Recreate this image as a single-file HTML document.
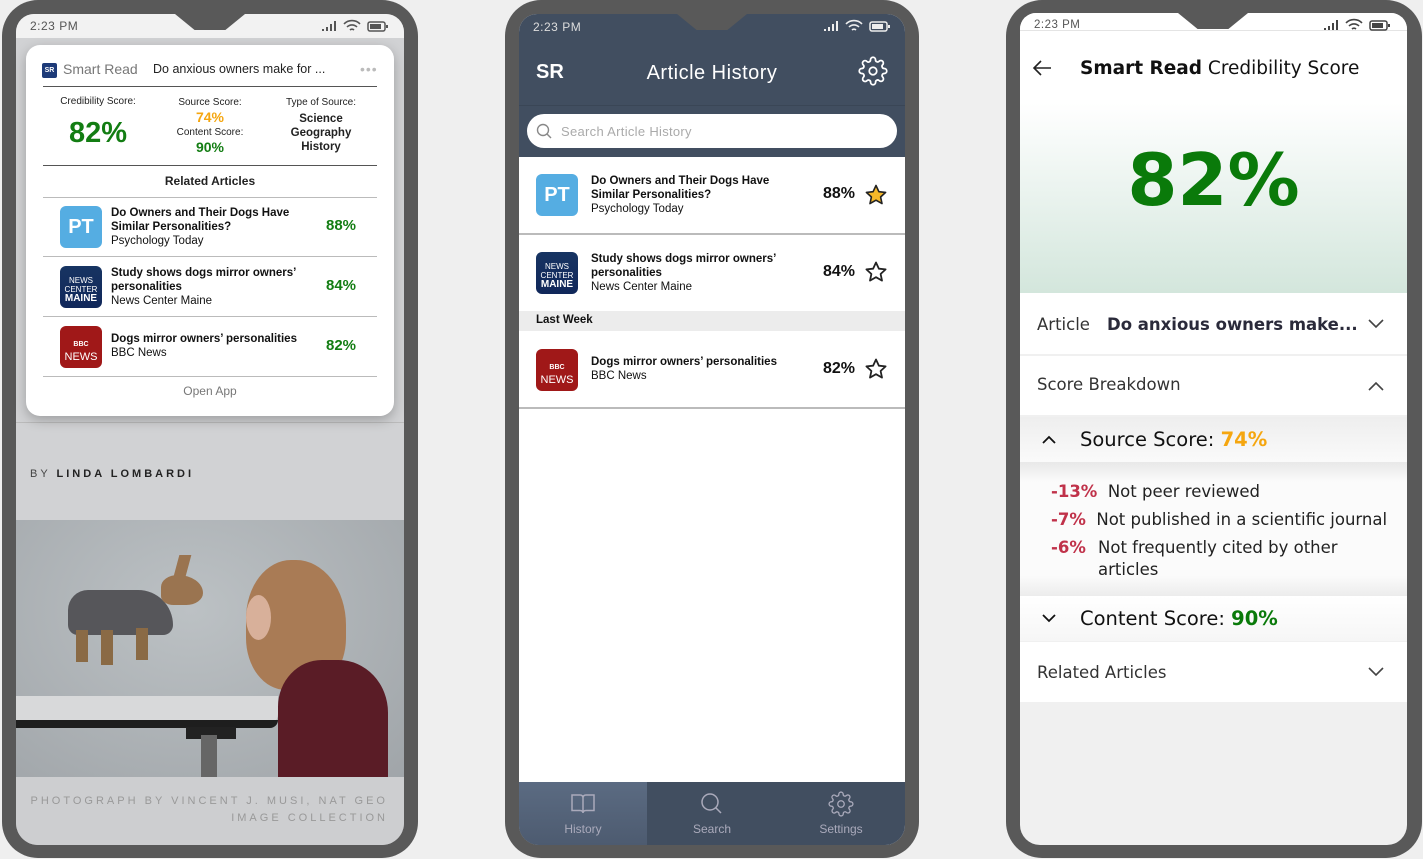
<!DOCTYPE html>
<html><head><meta charset="utf-8"><style>
*{box-sizing:border-box;margin:0;padding:0}
body{width:1423px;height:859px;background:#efefef;position:relative;overflow:hidden;font-family:"Liberation Sans",sans-serif}
.abs{position:absolute}
.frame{position:absolute;background:#595959;border-radius:36px}
.screen{position:absolute;overflow:hidden;border-radius:0 0 22px 22px}
.notch{position:absolute;width:70px;height:16px;background:#595959;clip-path:polygon(0 0,100% 0,72% 100%,28% 100%);border-radius:0 0 10px 10px}
.time{position:absolute;font-size:12px;letter-spacing:.5px}
.b{font-weight:bold}
.row{position:absolute;left:0;right:0}
.logo{position:absolute;width:42px;height:42px;border-radius:6px;color:#fff;text-align:center}
.pt{background:#55ade2;font:bold 20px "Liberation Sans",sans-serif;line-height:42px}
.ncm{background:linear-gradient(#173462,#10275a);font-size:8px;line-height:9px;padding-top:10px}
.bbc{background:#a01818;font-size:11px;line-height:12px;padding-top:11px}
.d{font-family:"DejaVu Sans",sans-serif}
</style></head><body>
<svg width="0" height="0" style="position:absolute"><defs>
<symbol id="star" viewBox="0 0 24 24"><path d="M12 2.5l2.9 6.2 6.7.7-5 4.6 1.4 6.6L12 17.2l-6 3.4 1.4-6.6-5-4.6 6.7-.7z"/></symbol>
<symbol id="stat" viewBox="0 0 70 14"><path d="M2 12h2v-2H2zM6 12h2V8H6zM10 12h2V5h-2zM14 12h2V2h-2z" fill="currentColor" stroke="none"/><path d="M24 5a11 11 0 0 1 16 0M27 8a7 7 0 0 1 10 0M30 11a3 3 0 0 1 4 0" fill="none" stroke="currentColor" stroke-width="1.6"/><rect x="48" y="3" width="17" height="9" rx="2" fill="none" stroke="currentColor" stroke-width="1.5"/><rect x="50" y="5" width="11" height="5" fill="currentColor"/><rect x="66" y="6" width="2" height="3" fill="currentColor"/></symbol>
</defs></svg>

<!-- PHONE 1 -->
<div class="frame" style="left:2px;top:0;width:416px;height:858px"></div>
<div class="screen" style="left:16px;top:14px;width:388px;height:831px;background:#d1d2d4;border-radius:18px 18px 22px 22px">
  <div class="abs" style="left:0;top:0;width:388px;height:24px;background:#f2f2f2"></div>
  <div class="time" style="left:14px;top:5px;color:#555">2:23 PM</div>
  <div class="abs" style="left:0;top:408px;width:388px;height:1px;background:#bbb"></div>
  <div class="abs" style="left:14px;top:454px;font-size:11px;letter-spacing:3px;color:#444">BY <b style="color:#222">LINDA LOMBARDI</b></div>
  <div class="abs" style="left:0;top:506px;width:388px;height:257px;background:radial-gradient(ellipse at 45% 35%,#bcc1c4,#a0a5a9)">
    <div class="abs" style="left:0;top:176px;width:262px;height:30px;background:#d8d9da;border-radius:0 0 12px 0"></div>
    <div class="abs" style="left:0;top:200px;width:262px;height:8px;background:#1e1e1e;border-radius:0 0 8px 0"></div>
    <div class="abs" style="left:170px;top:207px;width:50px;height:12px;background:#222"></div>
    <div class="abs" style="left:185px;top:215px;width:16px;height:42px;background:#666"></div>
    <div class="abs" style="left:52px;top:70px;width:105px;height:45px;background:#56565a;border-radius:20px 35px 10px 10px"></div>
    <div class="abs" style="left:60px;top:110px;width:12px;height:32px;background:#8a6a45"></div>
    <div class="abs" style="left:85px;top:110px;width:12px;height:35px;background:#8a6a45"></div>
    <div class="abs" style="left:120px;top:108px;width:12px;height:32px;background:#8a6a45"></div>
    <div class="abs" style="left:145px;top:55px;width:42px;height:30px;background:#9a7450;border-radius:40% 60% 40% 30%"></div>
    <div class="abs" style="left:160px;top:35px;width:12px;height:25px;background:#9a7450;transform:skewX(-15deg)"></div>
    <div class="abs" style="left:230px;top:40px;width:100px;height:130px;background:#a97b55;border-radius:45% 50% 40% 40%"></div>
    <div class="abs" style="left:230px;top:75px;width:25px;height:45px;background:#d8b09a;border-radius:50%"></div>
    <div class="abs" style="left:262px;top:140px;width:110px;height:117px;background:#5a1c26;border-radius:40% 45% 0 0"></div>
  </div>
  <div class="abs" style="left:0;top:763px;width:388px;height:68px;background:#cdced0"></div>
  <div class="abs" style="right:16px;top:779px;font-size:11px;letter-spacing:3px;color:#999;text-align:right;line-height:17px">PHOTOGRAPH BY VINCENT J. MUSI, NAT GEO<br>IMAGE COLLECTION</div>
</div>
<div class="notch" style="left:175px;top:14px"></div>
<div class="abs" style="left:26px;top:45px;width:368px;height:371px;background:#fff;border-radius:14px;box-shadow:0 4px 12px rgba(0,0,0,.25)">
  <div class="abs" style="left:16px;top:18px;width:15px;height:15px;background:#1d3a78;border-radius:2px;color:#fff;font-size:7px;font-weight:bold;line-height:15px;text-align:center">SR</div>
  <div class="abs" style="left:37px;top:16px;font-size:14px;color:#777">Smart Read</div>
  <div class="abs" style="left:127px;top:17px;font-size:12.5px;color:#222">Do anxious owners make for ...</div>
  <div class="abs" style="left:334px;top:16px;font-size:14px;color:#bbb;letter-spacing:1px">•••</div>
  <div class="abs" style="left:17px;top:41px;width:334px;height:1px;background:#555"></div>
  <div class="abs" style="left:17px;top:51px;width:110px;text-align:center;font-size:10px;color:#222">Credibility Score:</div>
  <div class="abs b" style="left:17px;top:72px;width:110px;text-align:center;font-size:29px;color:#137d13">82%</div>
  <div class="abs" style="left:130px;top:51px;width:108px;text-align:center;font-size:10px;color:#222;line-height:13px">Source Score:<br><b style="color:#f5a60f;font-size:14px;line-height:17px">74%</b><br>Content Score:<br><b style="color:#137d13;font-size:14px;line-height:17px">90%</b></div>
  <div class="abs" style="left:240px;top:51px;width:110px;text-align:center;font-size:10px;color:#222;line-height:14px">Type of Source:<br><b style="font-size:11.5px;line-height:14px;display:inline-block;margin-top:2px">Science<br>Geography<br>History</b></div>
  <div class="abs" style="left:17px;top:120px;width:334px;height:1px;background:#555"></div>
  <div class="abs b" style="left:17px;top:129px;width:334px;text-align:center;font-size:12px;color:#222">Related Articles</div>
  <div class="abs" style="left:17px;top:152px;width:334px;height:1px;background:#bbb"></div>
  <div class="logo pt" style="left:34px;top:161px">PT</div>
  <div class="abs" style="left:85px;top:161px;font-size:11.5px;line-height:14px;color:#111"><b>Do Owners and Their Dogs Have<br>Similar Personalities?</b><br>Psychology Today</div>
  <div class="abs b" style="left:300px;top:172px;font-size:15px;color:#137d13">88%</div>
  <div class="abs" style="left:17px;top:211px;width:334px;height:1px;background:#bbb"></div>
  <div class="logo ncm" style="left:34px;top:221px">NEWS<br>CENTER<br><b style="font-size:10px">MAINE</b></div>
  <div class="abs" style="left:85px;top:221px;font-size:11.5px;line-height:14px;color:#111"><b>Study shows dogs mirror owners’<br>personalities</b><br>News Center Maine</div>
  <div class="abs b" style="left:300px;top:232px;font-size:15px;color:#137d13">84%</div>
  <div class="abs" style="left:17px;top:271px;width:334px;height:1px;background:#bbb"></div>
  <div class="logo bbc" style="left:34px;top:281px"><b style="font-size:7px">BBC</b><br>NEWS</div>
  <div class="abs" style="left:85px;top:287px;font-size:11.5px;line-height:14px;color:#111"><b>Dogs mirror owners’ personalities</b><br>BBC News</div>
  <div class="abs b" style="left:300px;top:292px;font-size:15px;color:#137d13">82%</div>
  <div class="abs" style="left:17px;top:331px;width:334px;height:1px;background:#bbb"></div>
  <div class="abs" style="left:17px;top:339px;width:334px;text-align:center;font-size:12px;color:#777">Open App</div>
</div>

<!-- PHONE 2 -->
<div class="frame" style="left:505px;top:0;width:414px;height:858px"></div>
<div class="screen" style="left:519px;top:14px;width:386px;height:831px;background:#fff;border-radius:18px 18px 20px 20px">
  <div class="row" style="top:0;height:143px;background:#414e60"></div>
  <div class="time" style="left:14px;top:6px;color:#ddd">2:23 PM</div>
  <div class="abs b" style="left:17px;top:47px;font-size:20px;color:#fff">SR</div>
  <div class="abs" style="left:0;width:386px;top:48px;text-align:center;font-size:20px;color:#fff;letter-spacing:.5px">Article History</div>
  <svg class="abs" style="left:339px;top:42px" width="30" height="30" viewBox="0 0 24 24" fill="none" stroke="#fff" stroke-width="1.4"><circle cx="12" cy="12" r="3"/><path d="M19.4 15a1.65 1.65 0 0 0 .33 1.82l.06.06a2 2 0 1 1-2.83 2.83l-.06-.06a1.65 1.65 0 0 0-1.82-.33 1.65 1.65 0 0 0-1 1.51V21a2 2 0 1 1-4 0v-.09A1.65 1.65 0 0 0 9 19.4a1.65 1.65 0 0 0-1.82.33l-.06.06a2 2 0 1 1-2.83-2.83l.06-.06A1.65 1.65 0 0 0 4.68 15a1.65 1.65 0 0 0-1.51-1H3a2 2 0 1 1 0-4h.09A1.65 1.65 0 0 0 4.6 9a1.65 1.65 0 0 0-.33-1.82l-.06-.06a2 2 0 1 1 2.83-2.83l.06.06A1.65 1.65 0 0 0 9 4.68a1.65 1.65 0 0 0 1-1.51V3a2 2 0 1 1 4 0v.09a1.65 1.65 0 0 0 1 1.510 1.65 1.65 0 0 0 1.82-.33l.06-.06a2 2 0 1 1 2.83 2.83l-.06.06A1.65 1.65 0 0 0 19.4 9a1.65 1.65 0 0 0 1.51 1H21a2 2 0 1 1 0 4h-.09a1.65 1.65 0 0 0-1.51 1z"/></svg>
  <div class="row" style="top:91px;height:1px;background:#3a4656"></div>
  <div class="abs" style="left:8px;top:100px;width:370px;height:34px;background:#fff;border-radius:17px"></div>
  <svg class="abs" style="left:17px;top:109px" width="16" height="16" viewBox="0 0 16 16" fill="none" stroke="#888" stroke-width="1.4"><circle cx="7" cy="7" r="5.5"/><path d="M11 11l4 4"/></svg>
  <div class="abs" style="left:42px;top:110px;font-size:13px;color:#aaa;letter-spacing:.3px">Search Article History</div>
  <div class="logo pt" style="left:17px;top:160px">PT</div>
  <div class="abs" style="left:72px;top:160px;font-size:11.5px;line-height:14px;color:#111"><b>Do Owners and Their Dogs Have<br>Similar Personalities?</b><br>Psychology Today</div>
  <div class="abs b" style="left:304px;top:171px;font-size:16px;color:#111">88%</div>
  <svg class="abs" style="left:345px;top:169px" width="24" height="24"><use href="#star" fill="#f6b829" stroke="#222" stroke-width="1.6" stroke-linejoin="round"/></svg>
  <div class="row" style="top:219px;height:2px;background:#bbb"></div>
  <div class="logo ncm" style="left:17px;top:238px">NEWS<br>CENTER<br><b style="font-size:10px">MAINE</b></div>
  <div class="abs" style="left:72px;top:238px;font-size:11.5px;line-height:14px;color:#111"><b>Study shows dogs mirror owners’<br>personalities</b><br>News Center Maine</div>
  <div class="abs b" style="left:304px;top:249px;font-size:16px;color:#111">84%</div>
  <svg class="abs" style="left:345px;top:246px" width="24" height="24"><use href="#star" fill="none" stroke="#222" stroke-width="1.8" stroke-linejoin="round"/></svg>
  <div class="row" style="top:297px;height:20px;background:#ececec"></div>
  <div class="abs b" style="left:17px;top:300px;font-size:11.5px;color:#111">Last Week</div>
  <div class="logo bbc" style="left:17px;top:335px"><b style="font-size:7px">BBC</b><br>NEWS</div>
  <div class="abs" style="left:72px;top:341px;font-size:11.5px;line-height:14px;color:#111"><b>Dogs mirror owners’ personalities</b><br>BBC News</div>
  <div class="abs b" style="left:304px;top:346px;font-size:16px;color:#111">82%</div>
  <svg class="abs" style="left:345px;top:343px" width="24" height="24"><use href="#star" fill="none" stroke="#222" stroke-width="1.8" stroke-linejoin="round"/></svg>
  <div class="row" style="top:393px;height:2px;background:#bbb"></div>
  <div class="row" style="top:768px;height:63px;background:#414e60"></div>
  <div class="abs" style="left:0;top:768px;width:128px;height:63px;background:linear-gradient(#5b6b82,#4d5b70)"></div>
  <svg class="abs" style="left:51px;top:778px" width="26" height="24" viewBox="0 0 26 24" fill="none" stroke="#aab" stroke-width="1.5"><path d="M2 3h8c2 0 3 1 3 3v15c0-1.5-1-2.5-3-2.5H2zM24 3h-8c-2 0-3 1-3 3v15c0-1.5 1-2.5 3-2.5h8z"/></svg>
  <div class="abs" style="left:0;width:128px;top:808px;text-align:center;font-size:12px;color:#aab">History</div>
  <svg class="abs" style="left:181px;top:778px" width="24" height="24" viewBox="0 0 24 24" fill="none" stroke="#aab" stroke-width="1.5"><circle cx="10" cy="10" r="8"/><path d="M16 16l5 5"/></svg>
  <div class="abs" style="left:128px;width:130px;top:808px;text-align:center;font-size:12px;color:#aab">Search</div>
  <svg class="abs" style="left:309px;top:777px" width="26" height="26" viewBox="0 0 24 24" fill="none" stroke="#aab" stroke-width="1.2"><circle cx="12" cy="12" r="3"/><path d="M19.4 15a1.65 1.65 0 0 0 .33 1.82l.06.06a2 2 0 1 1-2.83 2.83l-.06-.06a1.65 1.65 0 0 0-1.82-.33 1.65 1.65 0 0 0-1 1.51V21a2 2 0 1 1-4 0v-.09A1.65 1.65 0 0 0 9 19.4a1.65 1.65 0 0 0-1.82.33l-.06.06a2 2 0 1 1-2.83-2.83l.06-.06A1.65 1.65 0 0 0 4.68 15a1.65 1.65 0 0 0-1.51-1H3a2 2 0 1 1 0-4h.09A1.65 1.65 0 0 0 4.6 9a1.65 1.65 0 0 0-.33-1.82l-.06-.06a2 2 0 1 1 2.83-2.83l.06.06A1.65 1.65 0 0 0 9 4.68a1.65 1.65 0 0 0 1-1.51V3a2 2 0 1 1 4 0v.09a1.65 1.65 0 0 0 1 1.51 1.65 1.65 0 0 0 1.82-.33l.06-.06a2 2 0 1 1 2.83 2.83l-.06.06A1.65 1.65 0 0 0 19.4 9a1.65 1.65 0 0 0 1.51 1H21a2 2 0 1 1 0 4h-.09a1.65 1.65 0 0 0-1.51 1z"/></svg>
  <div class="abs" style="left:258px;width:128px;top:808px;text-align:center;font-size:12px;color:#aab">Settings</div>
</div>
<div class="notch" style="left:677px;top:14px"></div>

<!-- PHONE 3 -->
<div class="frame" style="left:1006px;top:0;width:416px;height:858px"></div>
<div class="screen" style="left:1020px;top:13px;width:387px;height:832px;background:#f0f0f0;border-radius:16px 16px 20px 20px">
  <div class="row" style="top:0;height:280px;background:linear-gradient(#fff 0,#fff 90px,#d3e6dc 280px)"></div>
  <div class="row" style="top:17px;height:1px;background:#e4e4e4"></div>
  <div class="time" style="left:14px;top:6px;color:#555;font-size:11.5px">2:23 PM</div>
  <svg class="abs" style="left:12px;top:46px" width="20" height="18" viewBox="0 0 20 18" fill="none" stroke="#222" stroke-width="1.6"><path d="M19 9H2M9 2L2 9l7 7"/></svg>
  <div class="abs d" style="left:60px;top:45px;font-size:18.5px;color:#111"><b>Smart Read</b> Credibility Score</div>
  <div class="abs d b" style="left:0;width:387px;top:127px;text-align:center;font-size:72px;line-height:80px;color:#0a7a0a">82%</div>
  <div class="row" style="top:280px;height:61px;background:#fff"></div>
  <div class="abs d" style="left:17px;top:302px;font-size:16.5px;color:#333">Article</div>
  <div class="abs d b" style="left:87px;top:302px;font-size:16.5px;color:#2a2a3a">Do anxious owners make...</div>
  <svg class="abs" style="left:347px;top:305px" width="18" height="12" viewBox="0 0 18 12" fill="none" stroke="#444" stroke-width="1.6"><path d="M2 2l7 7 7-7"/></svg>
  <div class="row" style="top:343px;height:59px;background:#fff"></div>
  <div class="abs d" style="left:17px;top:362px;font-size:16.5px;color:#333">Score Breakdown</div>
  <svg class="abs" style="left:347px;top:367px" width="18" height="12" viewBox="0 0 18 12" fill="none" stroke="#444" stroke-width="1.6"><path d="M2 10l7-7 7 7"/></svg>
  <div class="row" style="top:404px;height:45px;background:linear-gradient(#eee,#fafafa)"></div>
  <svg class="abs" style="left:21px;top:421px" width="16" height="11" viewBox="0 0 16 11" fill="none" stroke="#111" stroke-width="1.8"><path d="M2 9l6-6 6 6"/></svg>
  <div class="abs d" style="left:60px;top:415px;font-size:19.5px;color:#111">Source Score: <b style="color:#f5a60f">74%</b></div>
  <div class="row" style="top:449px;height:134px;background:linear-gradient(#e8e8e8,#fbfbfb 15%,#fbfbfb 85%,#ececec)"></div>
  <div class="abs d" style="left:31px;top:465px;font-size:16.5px;color:#222;line-height:28px;white-space:nowrap"><b style="color:#c0324a">-13%</b>&nbsp; Not peer reviewed<br><b style="color:#c0324a">-7%</b>&nbsp; Not published in a scientific journal</div>
  <div class="abs d" style="left:31px;top:524px;font-size:16.5px;line-height:22px"><b style="color:#c0324a">-6%</b></div>
  <div class="abs d" style="left:78px;top:524px;font-size:16.5px;color:#222;line-height:22px">Not frequently cited by other<br>articles</div>
  <div class="row" style="top:583px;height:45px;background:linear-gradient(#fff,#f6f6f6)"></div>
  <svg class="abs" style="left:21px;top:600px" width="16" height="11" viewBox="0 0 16 11" fill="none" stroke="#111" stroke-width="1.8"><path d="M2 2l6 6 6-6"/></svg>
  <div class="abs d" style="left:60px;top:594px;font-size:19.5px;color:#111">Content Score: <b style="color:#0a7a0a">90%</b></div>
  <div class="row" style="top:629px;height:60px;background:#fff"></div>
  <div class="abs d" style="left:17px;top:650px;font-size:16.5px;color:#333">Related Articles</div>
  <svg class="abs" style="left:347px;top:653px" width="18" height="12" viewBox="0 0 18 12" fill="none" stroke="#444" stroke-width="1.6"><path d="M2 2l7 7 7-7"/></svg>
</div>
<div class="notch" style="left:1178px;top:13px"></div>

<!-- status icons -->
<svg class="abs" style="left:320px;top:19px;color:#555" width="70" height="14"><use href="#stat"/></svg>
<svg class="abs" style="left:822px;top:19px;color:#eee" width="70" height="14"><use href="#stat"/></svg>
<svg class="abs" style="left:1322px;top:18px;color:#444" width="70" height="14"><use href="#stat"/></svg>
</body></html>
